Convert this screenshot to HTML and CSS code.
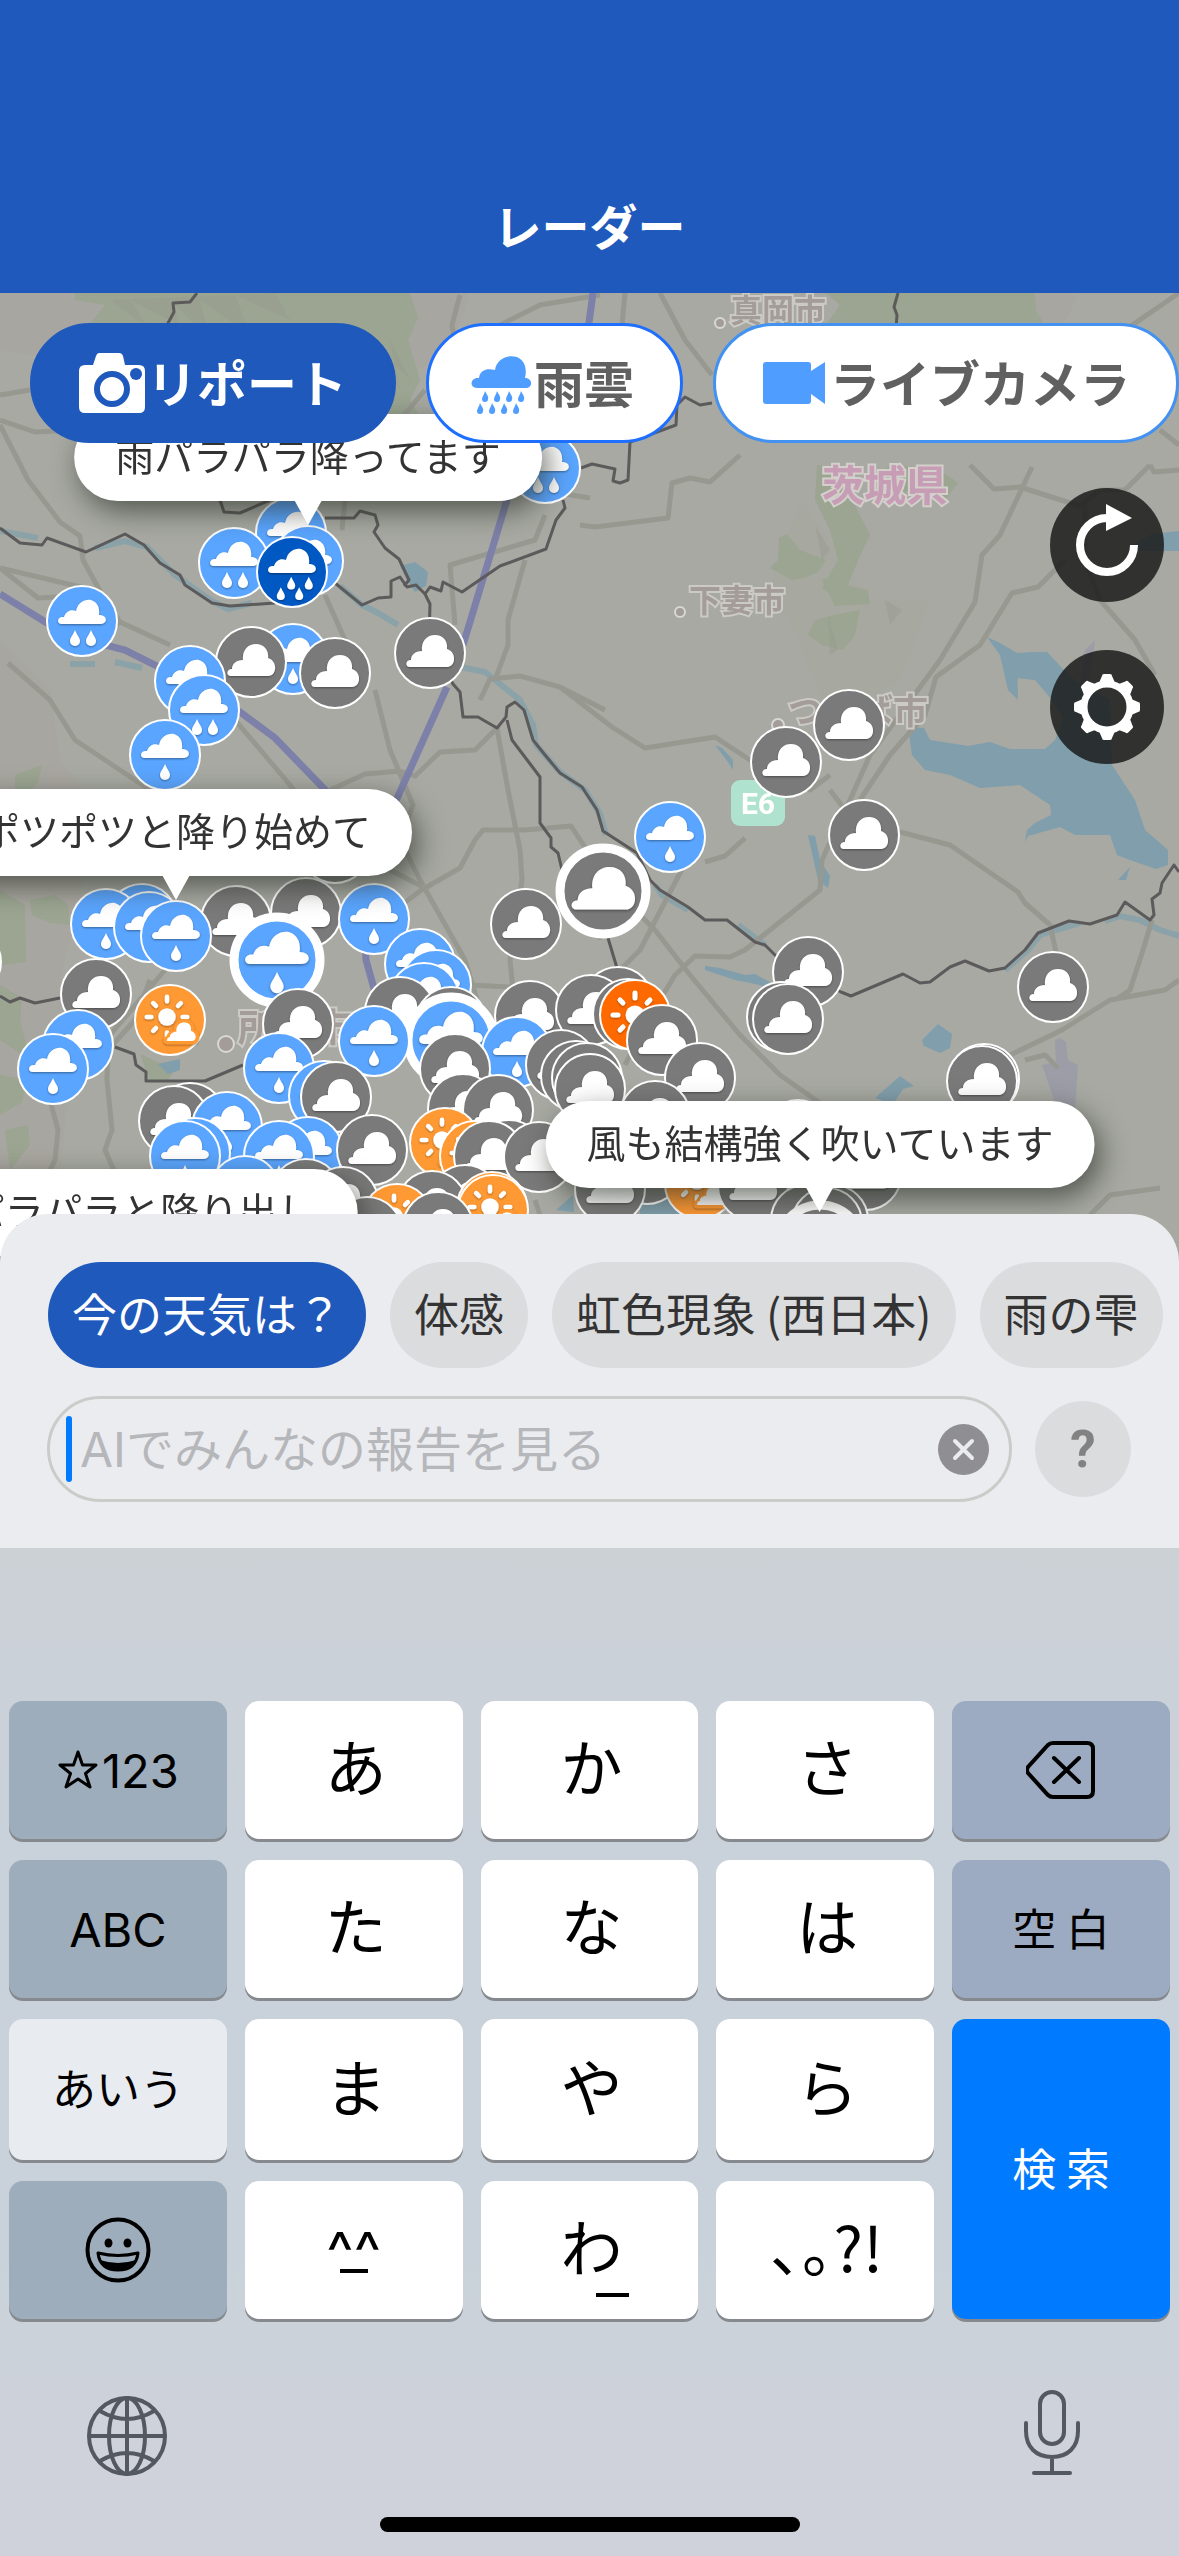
FILE: index.html
```html
<!DOCTYPE html>
<html lang="ja">
<head>
<meta charset="utf-8">
<meta name="viewport" content="width=device-width, initial-scale=1">
<title>レーダー</title>
<link rel="stylesheet" href="styles.css">
</head>
<body>
<div class="screen">
  <header class="header"><h1 class="title">レーダー</h1></header>

  <main class="map">
    <svg class="map-canvas" viewBox="0 293 1179 969" preserveAspectRatio="xMidYMin slice" role="img" aria-label="天気リポートの地図">
      <defs>
        <filter id="soft" x="-20%" y="-20%" width="140%" height="140%"><feDropShadow dx="0" dy="1" stdDeviation="1" flood-color="#000" flood-opacity=".4"/></filter>
        <path id="i-cloud" d="M-20 14C-25 14-25 7-19 7C-19 2-15-2-8-2C-9-12-3-18 5-18C13-18 18-12 17-4C27-1 26 14 17 14Z"/>
        <path id="i-rain" d="M-20 3C-26 3-25-5-18-4C-16-10-11-12-6-10C-4-19 3-22 9-21C15-19 18-14 17-6C26-6 26 3 18 3Z"/>
        <path id="i-drop" d="M0-8C2-3 5 0 5 3A5 5 0 0 1-5 3C-5 0-2-3 0-8Z"/>
        <g id="i-sun"><circle r="9.500"/><path d="M0-22V-17M0 17V22M-22 0H-17M17 0H22M-15-15L-12-12M12 12L15 15M-15 15L-12 12M12-12L15-15" stroke="#fff" stroke-width="5" stroke-linecap="round"/></g>
        <g id="g"><circle r="35" fill="#7a7a7a" stroke="#fff" stroke-width="2"/><use href="#i-cloud" fill="#fff" filter="url(#soft)"/></g>
        <g id="b"><circle r="35" fill="#5aa5ff" stroke="#fff" stroke-width="2"/><g fill="#fff" filter="url(#soft)"><use href="#i-rain"/><use href="#i-drop" y="17"/></g></g>
        <g id="b2"><circle r="35" fill="#5aa5ff" stroke="#fff" stroke-width="2"/><g fill="#fff" filter="url(#soft)"><use href="#i-rain"/><use href="#i-drop" x="-7" y="17"/><use href="#i-drop" x="9" y="17"/></g></g>
        <g id="d"><circle r="35" fill="#0058c3" stroke="#fff" stroke-width="2"/><g fill="#fff" filter="url(#soft)"><use href="#i-rain" y="-2"/><g transform="scale(.8)"><use href="#i-drop" x="-1" y="14"/><use href="#i-drop" x="21" y="14"/><use href="#i-drop" x="-14" y="27"/><use href="#i-drop" x="9" y="27"/></g></g></g>
        <g id="s"><circle r="35" fill="#ff6a00" stroke="#fff" stroke-width="2"/><use href="#i-sun" fill="#fff" filter="url(#soft)"/></g>
        <g id="p"><circle r="35" fill="#ff9933" stroke="#fff" stroke-width="2"/><g fill="#fff" filter="url(#soft)"><g transform="translate(-3 -3) scale(.92)"><use href="#i-sun"/></g><g transform="translate(11 13)"><use href="#i-cloud" transform="scale(.68)" stroke="#ff9933" stroke-width="5"/><use href="#i-cloud" transform="scale(.58)"/></g></g></g>
        <g id="G"><circle r="43" fill="#7a7a7a" stroke="#fff" stroke-width="9"/><use href="#i-cloud" transform="scale(1.330)" fill="#fff" filter="url(#soft)"/></g>
        <g id="B"><circle r="43" fill="#5aa5ff" stroke="#fff" stroke-width="9"/><g transform="scale(1.330)" fill="#fff" filter="url(#soft)"><use href="#i-rain"/><use href="#i-drop" y="17"/></g></g>
      </defs>

      <rect y="293" width="1179" height="969" fill="#a7a9a2"/>
      <!-- hills -->
      <g fill="#a9a5a0" opacity=".7">
        <path d="M0 293H470L450 350 400 380 330 400 0 350Z"/>
        <path d="M0 640L50 690 60 760 90 800 80 900 60 980 70 1080 50 1262H0Z"/>
        <path d="M800 500L870 600 930 600 900 680 830 720 790 620 770 590Z" opacity=".5"/>
        <path d="M930 293H1080L1060 330H940Z"/>
      </g>
      <!-- woods -->
      <g fill="#9ba591">
        <path d="M75 293H410L418 318 408 340 420 380 410 400 428 430 425 450 395 450 380 360 340 340 300 323 240 330 160 340 85 330 105 305 75 300Z"/>
        <path d="M826 293H1035L1036 310 1046 328H824L840 305Z"/>
        <path d="M817 465L848 470 852 500 870 535 858 560 848 585 832 595 822 588 838 560 830 530 815 500Z"/>
        <path d="M870 485L890 465 940 470 958 483 945 500 920 490 880 495Z"/>
        <path d="M779 538L787 534 800 550 826 560 818 572 804 578 792 580 770 568 778 560Z"/>
        <path d="M822 580L835 576 850 586 868 590 870 604 835 606Z"/>
        <path d="M834 615L860 610 855 635 843 650 822 645 808 635 815 620Z"/>
        <path d="M15 775L42 765 38 782 24 800 15 792ZM0 890L25 905 26 962 0 965ZM30 900L55 895 68 905 70 925 50 923 32 915ZM0 985L22 998 20 1020 30 1060 0 1040ZM0 1075L28 1080 22 1102 0 1115ZM5 1130L28 1125 30 1145 10 1170ZM140 1054L175 1070 168 1080 150 1080Z"/>
      </g>
      <g fill="#96998f" opacity=".35"><path d="M110 300L150 330 130 300 180 325 170 300 210 340 200 300 250 335 235 295 290 320 275 293ZM380 350L400 390 390 340 410 380Z"/><path d="M815 525L830 550 822 560ZM828 615L838 650 830 655ZM885 600L902 610 890 625Z"/></g>
      <!-- lakes and rivers -->
      <g fill="#809eab">
        <path d="M987 637L1000 643 1017 653 1018 700 1008 690 1000 655ZM1017 653L1033 652 1047 652 1062 668 1075 680 1110 700 1112 765 1135 800 1145 830 1168 850 1168 865 1156 869 1130 860 1117 855 1110 835 1075 835 1060 827 1028 836 1025 842 1027 830 1035 823 1051 815 1050 805 1035 795 1020 785 980 788 950 775 925 770 912 755 908 727 924 728 930 740 968 746 990 742 1010 749 1045 749 1055 740 1063 718 1052 700 1035 680 1016 678Z"/>
        <path d="M1130 546L1152 534 1179 531V551H1135Z"/>
        <path d="M400 566L415 562 428 572 426 586 415 592 407 580Z"/>
        <path d="M158 1064L180 1059 180 1070 168 1074ZM922 1040L938 1024 952 1034 950 1048 940 1053 924 1046ZM875 1098L900 1076 914 1086 903 1089 893 1104ZM640 1190H700V1220H640ZM556 1210L573 1195 574 1212Z"/>
        <path d="M808 835L815 836 820 860 830 876 828 888 818 880ZM715 745L722 748 733 760 733 770 728 762ZM1118 880L1130 867 1126 880Z"/>
        <path d="M705 966L720 968 745 975 755 974 775 985 780 995 760 985 735 980 705 970Z"/>
      </g>
      <path d="M0 531L38 538M95 548L125 541 147 547 175 575 210 600 228 609 252 603M340 586L362 605 378 613 398 625M70 664H95M115 662L142 668M460 667L485 672 520 700 533 725 536 745 560 772 585 790 600 814 606 835M655 885L662 895 688 910M738 925L765 945M1005 970L1028 950 1040 935 1080 923M1105 921L1120 916 1140 920 1160 930 1179 936" fill="none" stroke="#7fa0ac" stroke-width="6" opacity=".7"/>
      <path d="M1055 1040L1060 1038 1066 1042 1068 1060 1078 1065 1075 1108 1056 1105 1042 1065 1056 1062ZM1085 650L1095 640 1090 680 1080 685Z" fill="#9799a9" opacity=".7"/>
      <!-- roads -->
      <g fill="none" stroke="#979991" stroke-width="5" stroke-linejoin="round">
        <path d="M0 420L35 432 80 430M0 425L28 480 60 522 80 536 83 560 105 600 120 622 170 645M0 568L38 598 58 597M0 568L85 588 120 625M8 663L50 700 75 740 135 780 240 850M0 395L30 390"/>
        <path d="M460 295L452 325 455 345 M600 295L540 305 490 330M425 390L400 420 395 440M345 500L342 530M325 595L345 640 M545 515L535 540 450 565 455 625M525 560L508 620 508 645 495 680M540 490L590 498"/>
        <path d="M235 720L290 785 300 798M330 790L365 774 400 771 415 776 440 752 475 750 497 728 508 790 520 850 522 880 510 960 515 1010M375 690L390 750 413 805 400 840 420 880 465 960 480 1010"/>
        <path d="M390 870L425 888 460 868 475 840 483 830 525 830 571 826 590 855 600 940M480 700L490 679 520 676 560 687 605 710M424 888L395 910 370 935"/>
        <path d="M625 293L622 325M660 293L685 340 712 375M580 525L595 527 668 518 672 483 690 478 710 482 740 455M970 465L994 489 1020 487 1080 506 1100 490 1125 490 1150 465M1179 293L1125 330M1150 465L1154 472 1179 470M1160 430L1179 445"/>
        <path d="M1032 467L1000 535 982 555 975 602 940 660 870 755 850 800 840 820 822 860 820 890 770 930 745 950 730 957 695 956 675 975 645 1025 625 1065M1065 560L1038 587 1012 593 980 645 936 677 925 715 890 755 860 800M1085 505V560L1100 600 1135 640 1155 675"/>
        <path d="M560 687L612 727 645 748 715 737 765 770 810 790 830 775M830 790L845 810 900 832 950 845 1018 892 1025 903 1050 925 1060 970M705 862L725 856 745 838"/>
        <path d="M590 880L630 905 655 930 690 975 740 1035 780 1075 830 1110M692 850L640 950 605 985M1179 980L1165 990 1110 1000 1062 1030 1010 1055 990 1110M1152 920L1143 950 1130 990 1115 1000M1025 1060L1045 1055 1058 1068M1090 1215L1110 1195 1160 1188M850 1210L900 1180"/>
        <path d="M150 980L135 1020 108 1050 107 1080 112 1130 105 1150 118 1180M50 1100L58 1130 55 1160 35 1200M165 970L110 1035M470 985L530 988M535 1200L545 1230"/>
      </g>
      <g fill="none" stroke="#7d80a8" stroke-width="7">
        <path d="M593 293L588 330 510 490 463 645M447 687L395 803M362 885L366 960 380 1010M0 594L47 623 105 645 125 650 155 665 240 712 275 738 332 797"/>
      </g>
      <!-- prefecture borders -->
      <g fill="none" stroke="#5c5a5b" stroke-width="3" stroke-linejoin="round">
        <path d="M197 293L190 302 173 303 174 312 167 325M898 293L894 307 897 315 896 328M0 528L20 543 42 545 47 538 86 552 125 534 144 545 160 563 180 575 185 585 212 603 230 606 275 603M335 583L362 605 378 598 391 597 391 581 400 577 407 587 416 585 425 594 430 604 429 640 453 684 460 692 463 717 478 717 497 728 506 717 507 707 515 702 524 710 533 740 545 755 560 773 582 787 597 810 603 831 637 853 650 880 660 890 688 907 705 920 727 920 755 942 765 945 785 965 841 992 851 996 903 974 920 983 930 982 950 967 965 961 989 971 1005 968 1025 950 1038 933 1069 921 1090 924 1117 915 1125 902 1150 920 1154 915 1152 899 1160 893 1162 883 1174 865 1179 872"/>
        <path d="M507 720L512 740 540 777 540 823 551 838 551 847 558 853 562 870M608 938L617 968M220 500L224 512 240 513 270 500M325 518H354L360 511 375 515 378 525 374 532 385 548 399 559 409 580 404 586M425 594L430 587 441 591 443 582 462 592 500 566 546 549 556 520 565 508 563 500M581 468L592 464 615 469 613 481 620 483 628 480 630 442 676 425 677 405 685 397 700 405 712 403M0 996L10 1002 20 998 35 1003 60 998M115 1047L134 1054 136 1065 146 1072V1081L205 1081 243 1065"/>
      </g>

      <g class="place">
        <text x="730" y="322">真岡市</text><text x="689" y="612">下妻市</text><text x="788" y="724" class="place-mid">つくば市</text><text x="238" y="1041" class="place-large">所沢市</text>
        <circle cx="720" cy="323" r="5"/><circle cx="680" cy="612" r="5"/><circle cx="778" cy="725" r="6"/><circle cx="226" cy="1044" r="8"/>
        <text x="822" y="501" class="pref">茨城県</text>
      </g>
      <rect x="731" y="780" width="54" height="46" rx="9" fill="#b0e3cf"/>
      <text x="758" y="814" class="route">E6</text>

      <!-- weather reports -->
      <use href="#b2" x="545" y="468"/><use href="#b2" x="291" y="533"/><use href="#b2" x="234" y="563"/><use href="#b2" x="308" y="561"/><use href="#d" x="292" y="572"/>
      <use href="#b2" x="82" y="621"/><use href="#b" x="293" y="659"/><use href="#g" x="251" y="662"/><use href="#g" x="335" y="673"/><use href="#g" x="430" y="653"/>
      <use href="#b2" x="190" y="681"/><use href="#b2" x="204" y="710"/><use href="#b" x="165" y="755"/>
      <use href="#g" x="849" y="725"/><use href="#g" x="786" y="762"/><use href="#g" x="864" y="835"/><use href="#b" x="670" y="837"/><use href="#g" x="335" y="848"/>
      <use href="#g" x="526" y="924"/><use href="#G" x="603" y="891"/>
      <use href="#b" x="142" y="919"/><use href="#b" x="106" y="924"/><use href="#b" x="149" y="927"/><use href="#g" x="236" y="921"/><use href="#b" x="176" y="936"/>
      <use href="#g" x="306" y="913"/><use href="#b" x="374" y="919"/><use href="#B" x="277" y="960"/><use href="#b" x="-34" y="962"/>
      <use href="#b" x="420" y="964"/><use href="#b" x="436" y="985"/><use href="#b" x="424" y="998"/>
      <use href="#g" x="96" y="994"/><use href="#p" x="170" y="1020"/><use href="#g" x="298" y="1024"/><use href="#b" x="78" y="1045"/><use href="#b" x="53" y="1069"/>
      <use href="#g" x="400" y="1012"/><use href="#g" x="451" y="1022"/><use href="#B" x="451" y="1040"/><use href="#b" x="374" y="1041"/>
      <use href="#g" x="530" y="1016"/><use href="#b" x="517" y="1052"/><use href="#g" x="455" y="1069"/>
      <use href="#g" x="808" y="972"/><use href="#g" x="782" y="1017"/><use href="#g" x="788" y="1019"/><use href="#g" x="1053" y="987"/>
      <use href="#g" x="618" y="1002"/><use href="#g" x="591" y="1010"/><use href="#g" x="628" y="1014"/><use href="#s" x="635" y="1015"/><use href="#g" x="662" y="1040"/>
      <use href="#g" x="561" y="1065"/><use href="#g" x="576" y="1076"/><use href="#g" x="587" y="1078"/><use href="#g" x="590" y="1089"/>
      <use href="#g" x="984" y="1079"/><use href="#g" x="982" y="1081"/><use href="#g" x="700" y="1078"/><use href="#g" x="655" y="1116"/><use href="#g" x="798" y="1135"/>
      <use href="#b" x="279" y="1068"/><use href="#b" x="324" y="1096"/><use href="#g" x="336" y="1097"/>
      <use href="#g" x="463" y="1109"/><use href="#g" x="498" y="1110"/><use href="#g" x="190" y="1118"/><use href="#g" x="174" y="1121"/>
      <use href="#b" x="227" y="1127"/><use href="#b" x="195" y="1153"/><use href="#b" x="185" y="1156"/><use href="#b" x="308" y="1152"/><use href="#b" x="279" y="1156"/><use href="#g" x="372" y="1150"/>
      <use href="#p" x="445" y="1143"/><use href="#p" x="475" y="1156"/><use href="#g" x="509" y="1155"/><use href="#g" x="489" y="1156"/><use href="#g" x="539" y="1157"/>
      <use href="#b" x="245" y="1191"/><use href="#g" x="306" y="1194"/><use href="#g" x="343" y="1202"/><use href="#g" x="465" y="1200"/><use href="#g" x="432" y="1206"/>
      <use href="#p" x="397" y="1219"/><use href="#p" x="492" y="1207"/><use href="#p" x="493" y="1210"/><use href="#g" x="367" y="1232"/><use href="#g" x="438" y="1227"/>
      <use href="#g" x="647" y="1169"/><use href="#g" x="610" y="1189"/><use href="#p" x="700" y="1184"/><use href="#g" x="866" y="1175"/><use href="#g" x="753" y="1186"/>
      <use href="#g" x="806" y="1220"/><use href="#g" x="833" y="1220"/><use href="#g" x="827" y="1223"/><use href="#G" x="820" y="1248"/>
    </svg>

    <p class="bubble" style="left:308px;top:121px">雨パラパラ降ってます</p>
    <p class="bubble" style="left:176px;top:496px">ポツポツと降り始めて</p>
    <p class="bubble" style="left:820px;top:808px">風も結構強く吹いています</p>
    <p class="bubble" style="left:141px;top:876px">パラパラと降り出し</p>

    <nav class="layers">
      <button class="layer layer-active">
        <svg width="72" height="66" viewBox="0 0 72 66"><path d="M24 3H44Q47 3 48 6L50 15H64Q70 15 70 21V57Q70 63 64 63H10Q4 63 4 57V21Q4 15 10 15H18L21 6Q22 3 24 3Z" fill="#fff"/><circle cx="37" cy="39" r="15" fill="none" stroke="#1f59bb" stroke-width="6"/><circle cx="61" cy="24" r="6" fill="#1f59bb"/></svg><span class="layer-name">リポート</span>
      </button>
      <button class="layer">
        <svg width="63" height="62" viewBox="0 0 63 62"><g fill="#4f9dff"><path d="M6 36C-2 36 -1 25 8 26C9 18 16 16 24 18C26 2 50-1 54 14C55 18 55 22 54 26C62 26 62 36 55 36Z"/><path id="rd" d="M14 39C16 43 18 45 17 47A3 3 0 0 1 11 47C11 45 13 43 14 39Z"/><use href="#rd" x="12"/><use href="#rd" x="24"/><use href="#rd" x="36"/><use href="#rd" x="-5" y="12"/><use href="#rd" x="7" y="12"/><use href="#rd" x="19" y="12"/><use href="#rd" x="31" y="12"/></g></svg><span class="layer-name">雨雲</span>
      </button>
      <button class="layer layer-camera">
        <svg width="72" height="44" viewBox="0 0 72 44"><path d="M8 1H50Q53 1 53 4V10L67 1V43L53 33V40Q53 43 50 43H8Q5 43 5 40V4Q5 1 8 1Z" fill="#4f9dff"/></svg><span class="layer-name">ライブカメラ</span>
      </button>
    </nav>

    <div class="tools">
      <button class="tool" aria-label="更新"><svg width="80" height="80" viewBox="0 0 80 80"><path d="M67 40A27 27 0 1 1 40 13" fill="none" stroke="#fff" stroke-width="8"/><path d="M39-1L65 13 39 26Z" fill="#fff"/></svg></button>
      <button class="tool" aria-label="設定"><svg width="80" height="80" viewBox="-40 -40 80 80"><g fill="#fff"><path id="tooth" d="M-9-22L-5-31Q-5-33-3-33H3Q5-33 5-31L9-22Z"/><use href="#tooth" transform="rotate(45)"/><use href="#tooth" transform="rotate(90)"/><use href="#tooth" transform="rotate(135)"/><use href="#tooth" transform="rotate(180)"/><use href="#tooth" transform="rotate(225)"/><use href="#tooth" transform="rotate(270)"/><use href="#tooth" transform="rotate(315)"/></g><circle r="23" fill="none" stroke="#fff" stroke-width="7"/></svg></button>
    </div>
  </main>

  <section class="panel">
    <div class="chips">
      <button class="chip chip-active">今の天気は？</button>
      <button class="chip">体感</button>
      <button class="chip">虹色現象 (西日本)</button>
      <button class="chip">雨の雫</button>
    </div>
    <form class="search">
      <label class="field">
        <span class="caret"></span>
        <input class="input" type="text" aria-label="報告を検索" placeholder="AIでみんなの報告を見る">
        <button class="clear" type="button" aria-label="消去"><svg width="51" height="51" viewBox="0 0 51 51"><circle cx="25.500" cy="25.500" r="25.500" fill="#8e8e93"/><path d="M17 17L34 34M34 17L17 34" stroke="#ebecf0" stroke-width="4" stroke-linecap="round"/></svg></button>
      </label>
      <button class="help" type="button">?</button>
    </form>
  </section>

  <section class="keyboard">
    <div class="keys">
      <button class="key key-dark"><svg width="42" height="42" viewBox="0 0 42 42"><path d="M21 3L25.500 16H39L28.500 24.500 33 38 21 30 9 38 13.500 24.500 3 16H16.500Z" fill="none" stroke="#000" stroke-width="3" stroke-linejoin="round"/></svg>123</button>
      <button class="key key-kana">あ</button><button class="key key-kana">か</button><button class="key key-kana">さ</button>
      <button class="key key-dark key-blue" aria-label="削除"><svg width="70" height="60" viewBox="0 0 70 60"><path d="M27 3H61Q67 3 67 9V51Q67 57 61 57H27Q24 57 22 55L2 33Q0 30 2 27L22 5Q24 3 27 3Z" fill="none" stroke="#000" stroke-width="4"/><path d="M28 18L53 42M53 18L28 42" stroke="#000" stroke-width="4" stroke-linecap="round"/></svg></button>
      <button class="key key-dark">ABC</button>
      <button class="key key-kana">た</button><button class="key key-kana">な</button><button class="key key-kana">は</button>
      <button class="key key-dark key-blue key-word">空 白</button>
      <button class="key key-light key-word">あいう</button>
      <button class="key key-kana">ま</button><button class="key key-kana">や</button><button class="key key-kana">ら</button>
      <button class="key key-search key-word">検 索</button>
      <button class="key key-dark" aria-label="絵文字"><svg width="66" height="66" viewBox="0 0 66 66"><circle cx="33" cy="33" r="30.500" fill="none" stroke="#000" stroke-width="4"/><ellipse cx="23.500" cy="26" rx="4" ry="4.500"/><ellipse cx="42.500" cy="26" rx="4" ry="4.500"/><path d="M13 36Q33 41 53 36Q51 53 33 53Q15 53 13 36Z" fill="none" stroke="#000" stroke-width="3" stroke-linejoin="round"/><path d="M15 43Q33 49 51 43Q46 54 33 54Q20 54 15 43Z"/></svg></button>
      <button class="key key-face"><span>^^</span><span class="dash"></span></button>
      <button class="key key-kana key-wa">わ<span class="dash dash-wa"></span></button>
      <button class="key key-kana">､｡?!</button>
    </div>
    <div class="dock">
      <button class="dock-button" aria-label="次のキーボード"><svg width="80" height="88" viewBox="0 0 80 88"><g fill="none" stroke="#535861" stroke-width="4"><circle cx="40" cy="47" r="38"/><ellipse cx="40" cy="47" rx="18" ry="38"/><path d="M40 9V85M2 47H78M13 22Q40 38 67 22M13 72Q40 56 67 72"/></g></svg></button>
      <button class="dock-button" aria-label="音声入力"><svg width="80" height="88" viewBox="0 0 80 88"><g fill="none" stroke="#535861" stroke-width="4" stroke-linecap="round"><rect x="28" y="3" width="24" height="52" rx="12"/><path d="M14 34V42C14 58 24 68 40 68S66 58 66 42V34M40 68V84M22 84H58"/></g></svg></button>
    </div>
    <div class="home"></div>
  </section>
</div>
</body>
</html>
```
FILE: styles.css
```css
* { box-sizing: border-box; }
body {
  margin: 0;
  font-family: "Noto Sans CJK JP", sans-serif;
  color: #333;
}
button {
  margin: 0;
  padding: 0;
  border: 0;
  background: none;
  font: inherit;
  color: inherit;
}
svg { flex: none; }
.screen {
  display: flex;
  flex-direction: column;
  min-height: 100vh;
  overflow: hidden;
}

.header {
  padding: 194px 0 39px;
  background: #1f59bb;
}
.title {
  margin: 0;
  font-size: 48px;
  line-height: 60px;
  font-weight: 700;
  text-align: center;
  color: #fff;
}

/* map */
.map {
  position: relative;
  flex: 1;
  min-height: 900px;
}
.map-canvas {
  position: absolute;
  inset: 0 0 -48px;
  width: 100%;
  height: calc(100% + 48px);
}
.place text {
  font-size: 32px;
  font-weight: 700;
  fill: #a39c98;
  stroke: #cbcac5;
  stroke-width: 4px;
  paint-order: stroke;
}
.place circle { fill: #a39c98; stroke: #d8d8d4; stroke-width: 2px; }
.place .place-mid { font-size: 35px; }
.place .place-large { font-size: 38px; }
.place .pref { font-size: 42px; fill: #c79db5; stroke: #d3d0cc; }
.route {
  font: 700 30px "Roboto", sans-serif;
  fill: #fff;
  text-anchor: middle;
}
.bubble {
  position: absolute;
  margin: 0;
  padding: 0 41px 6px;
  border-radius: 44px;
  background: #fff;
  box-shadow: 6px 10px 28px rgba(40, 45, 35, .65);
  font-size: 39px;
  line-height: 81px;
  white-space: nowrap;
  transform: translateX(-50%);
}
.bubble::after {
  content: "";
  position: absolute;
  left: 50%;
  top: 84px;
  margin-left: -15px;
  border: 15px solid transparent;
  border-top: 27px solid #fff;
  border-bottom: 0;
}
.layers {
  position: relative;
  display: flex;
  gap: 30px;
  padding: 30px 0 0 30px;
}
.layer {
  display: flex;
  flex: none;
  align-items: center;
  height: 120px;
  padding: 0 46px 0 42px;
  border: 3px solid #1f6fff;
  border-radius: 60px;
  background: #fff;
  font-size: 50px;
  font-weight: 700;
  color: #606060;
  white-space: nowrap;
}
.layer-name { padding-bottom: 5px; }
.layer-camera { border-color: #4391f0; }
.layer-active { border-color: #1f59bb; background: #1f59bb; color: #fff; }
.tools {
  position: relative;
  display: flex;
  flex-direction: column;
  align-items: flex-end;
  gap: 48px;
  padding: 45px 15px 0 0;
}
.tool {
  display: flex;
  align-items: center;
  justify-content: center;
  width: 114px;
  height: 114px;
  border-radius: 50%;
  background: rgba(20, 20, 20, .8);
}
.tool svg { overflow: visible; }

/* report search */
.panel {
  position: relative;
  display: flex;
  flex-direction: column;
  gap: 28px;
  padding: 48px 0 46px;
  border-radius: 48px 48px 0 0;
  background: #ebecf0;
}
.chips {
  display: flex;
  gap: 24px;
  padding-left: 48px;
}
.chip {
  flex: none;
  height: 106px;
  padding: 0 24px 5px;
  border-radius: 53px;
  background: #dbdcde;
  font-size: 45px;
  white-space: nowrap;
}
.chip-active { background: #1f59bb; color: #fff; }
.search {
  display: flex;
  align-items: center;
  gap: 23px;
  padding: 0 48px 0 47px;
}
.field {
  display: flex;
  flex: 1;
  align-items: center;
  gap: 8px;
  height: 106px;
  padding: 0 20px 0 16px;
  border: 3px solid #cbccca;
  border-radius: 53px;
}
.caret {
  width: 6px;
  height: 66px;
  border-radius: 3px;
  background: #007aff;
}
.input {
  flex: 1;
  min-width: 0;
  height: 72px;
  padding: 0;
  border: 0;
  outline: 0;
  background: none;
  font: 48px "Inter", "Noto Sans CJK JP", sans-serif;
}
.input::placeholder { color: #b6b7ba; opacity: 1; }
.clear { display: flex; }
.help {
  width: 96px;
  height: 96px;
  border-radius: 50%;
  background: #dbdcde;
  font: 700 51px "Roboto", sans-serif;
  color: #828282;
}

/* keyboard */
.keyboard {
  padding: 153px 9px 24px;
  background: linear-gradient(#ccd1d6, #c9d1da 30%, #c9d2da 70%, #cfd2da 90%);
}
.keys {
  display: grid;
  grid-template-columns: repeat(5, 1fr);
  grid-template-rows: 138px 138px 141px 138px;
  gap: 21px 18px;
}
.key {
  display: flex;
  align-items: center;
  justify-content: center;
  border-radius: 14px;
  background: #fff;
  box-shadow: 0 3px 0 #868a8f;
  font: 47px "Inter", "Noto Sans CJK JP", sans-serif;
  color: #000;
}
.key-dark { gap: 3px; background: #9eadbb; }
.key-blue { background: #9cabc2; }
.key-light { background: #e8ebf0; }
.key-kana { padding: 0 0 10px 4px; font: 62px "Noto Sans CJK JP", sans-serif; }
.key-word { padding-bottom: 5px; font: 44px "Noto Sans CJK JP", sans-serif; }
.key-search {
  grid-row: 3 / 5;
  grid-column: 5;
  background: #007aff;
  color: #fff;
}
.key-face {
  flex-direction: column;
  padding-bottom: 4px;
  font-size: 58px;
  line-height: 58px;
}
.dash {
  width: 28px;
  height: 4px;
  background: #000;
}
.key-face .dash { margin-top: -12px; }
.key-wa { position: relative; }
.dash-wa {
  position: absolute;
  right: 69px;
  bottom: 22px;
  width: 33px;
}
.dock {
  display: flex;
  justify-content: space-between;
  padding: 70px 78px 0;
}
.dock-button { display: flex; }
.home {
  width: 420px;
  height: 15px;
  margin: 40px auto 0;
  border-radius: 8px;
  background: #000;
}
```
